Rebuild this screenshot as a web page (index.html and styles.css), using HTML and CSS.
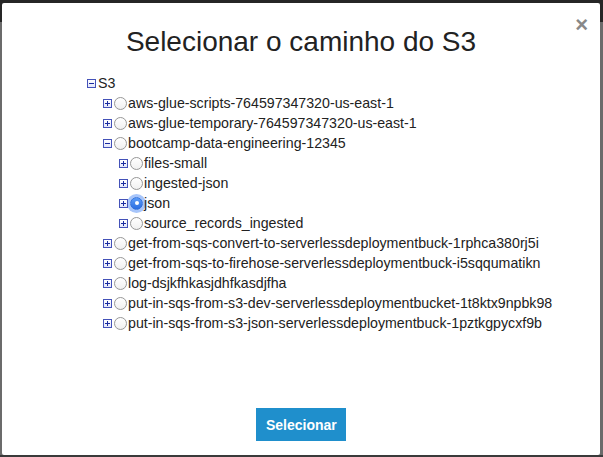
FILE: index.html
```html
<!DOCTYPE html>
<html>
<head>
<meta charset="utf-8">
<link rel="stylesheet" href="styles.css">
</head>
<body>
<div class="modal">
  <button class="close" type="button">×</button>
  <h3 class="title">Selecionar o caminho do S3</h3>
  <ul class="tree">
    <li>
      <div class="node"><span class="exp minus"></span><span class="label">S3</span></div>
      <ul>
        <li><div class="node"><span class="exp"></span><span class="radio"></span><span class="label">aws-glue-scripts-764597347320-us-east-1</span></div></li>
        <li><div class="node"><span class="exp"></span><span class="radio"></span><span class="label">aws-glue-temporary-764597347320-us-east-1</span></div></li>
        <li>
          <div class="node"><span class="exp minus"></span><span class="radio"></span><span class="label">bootcamp-data-engineering-12345</span></div>
          <ul>
            <li><div class="node"><span class="exp"></span><span class="radio"></span><span class="label">files-small</span></div></li>
            <li><div class="node"><span class="exp"></span><span class="radio"></span><span class="label">ingested-json</span></div></li>
            <li><div class="node"><span class="exp"></span><span class="radio checked"></span><span class="label">json</span></div></li>
            <li><div class="node"><span class="exp"></span><span class="radio"></span><span class="label">source_records_ingested</span></div></li>
          </ul>
        </li>
        <li><div class="node"><span class="exp"></span><span class="radio"></span><span class="label">get-from-sqs-convert-to-serverlessdeploymentbuck-1rphca380rj5i</span></div></li>
        <li><div class="node"><span class="exp"></span><span class="radio"></span><span class="label">get-from-sqs-to-firehose-serverlessdeploymentbuck-i5sqqumatikn</span></div></li>
        <li><div class="node"><span class="exp"></span><span class="radio"></span><span class="label">log-dsjkfhkasjdhfkasdjfha</span></div></li>
        <li><div class="node"><span class="exp"></span><span class="radio"></span><span class="label">put-in-sqs-from-s3-dev-serverlessdeploymentbucket-1t8ktx9npbk98</span></div></li>
        <li><div class="node"><span class="exp"></span><span class="radio"></span><span class="label">put-in-sqs-from-s3-json-serverlessdeploymentbuck-1pztkgpycxf9b</span></div></li>
      </ul>
    </li>
  </ul>
  <div class="footer"><button class="btn" type="button">Selecionar</button></div>
</div>
</body>
</html>
```

FILE: styles.css
```css
html, body {
  margin: 0;
  padding: 0;
}
body {
  width: 603px;
  height: 457px;
  overflow: hidden;
  background: linear-gradient(#262626 0, #262626 22px, #6b6b6b 22px, #6b6b6b 455px, #3a3a3a 455px);
  font-family: "Liberation Sans", Arial, Helvetica, sans-serif;
  color: #222;
  padding: 3px 0 0 2px;
  box-sizing: border-box;
}
.modal {
  position: relative;
  width: 598px;
  height: 452px;
  background: #fff;
  border-radius: 2px;
  box-sizing: border-box;
  padding-top: 22px;
  display: flex;
  flex-direction: column;
}
.close {
  position: absolute;
  top: 8px;
  right: 12px;
  border: 0;
  background: none;
  padding: 0;
  font-family: "Liberation Sans", Arial, sans-serif;
  font-weight: bold;
  font-size: 22px;
  line-height: 28px;
  color: #888;
  cursor: pointer;
}
.title {
  margin: 0;
  font-weight: normal;
  font-size: 28px;
  line-height: 34px;
  text-align: center;
  color: #222;
}
.tree, .tree ul {
  list-style: none;
  margin: 0;
  padding: 0;
}
.tree {
  margin-top: 14px;
  padding-left: 85px;
}
.tree ul {
  padding-left: 16px;
}
.node {
  display: flex;
  align-items: center;
  height: 20px;
  font-size: 14.2px;
  line-height: 20px;
  white-space: nowrap;
}
.exp {
  position: relative;
  width: 9px;
  height: 9px;
  box-sizing: border-box;
  border: 1px solid #4452b8;
  background: linear-gradient(#ffffff, #e2e5fa);
  flex: none;
  margin-right: 2px;
}
.exp::before {
  content: "";
  position: absolute;
  left: 1px;
  right: 1px;
  top: 3px;
  height: 1px;
  background: #1a2ba0;
}
.exp::after {
  content: "";
  position: absolute;
  top: 1px;
  bottom: 1px;
  left: 3px;
  width: 1px;
  background: #1a2ba0;
}
.exp.minus::after {
  display: none;
}
.radio {
  width: 13px;
  height: 13px;
  box-sizing: border-box;
  border-radius: 50%;
  border: 1px solid #979797;
  background: linear-gradient(#ffffff, #f0f0f0);
  flex: none;
  margin-right: 1px;
  display: flex;
  align-items: center;
  justify-content: center;
}
.radio.checked {
  border-color: #2f6fdc;
  background: linear-gradient(#5b9cf8, #2a6de0);
  box-shadow: 0 0 0 3px rgba(80, 140, 245, 0.5);
}
.radio.checked::after {
  content: "";
  width: 4px;
  height: 4px;
  border-radius: 50%;
  background: #fff;
}
.label {
  color: #222;
}
.footer {
  margin-top: auto;
  display: flex;
  justify-content: center;
  padding-bottom: 14px;
}
.btn {
  border: 0;
  border-radius: 0;
  background: #1f8fcc;
  color: #fff;
  font-family: "Liberation Sans", Arial, sans-serif;
  font-weight: bold;
  font-size: 14px;
  height: 33px;
  padding: 0 10px;
  width: 90px;
}
```
